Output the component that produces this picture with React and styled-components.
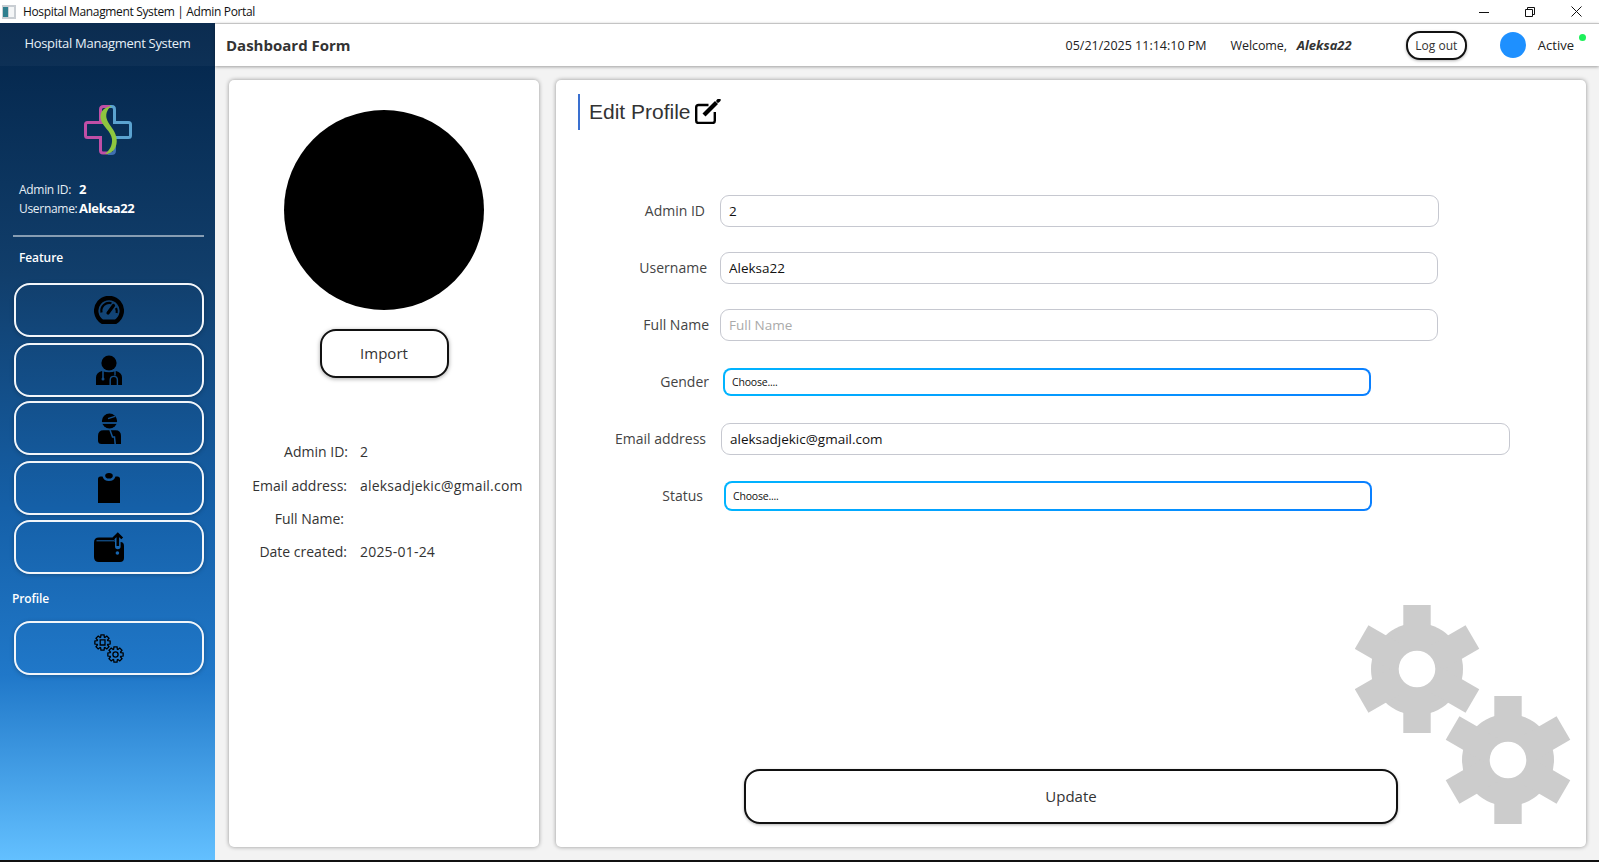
import React from "react";
import styled, { createGlobalStyle } from "styled-components";

const GlobalStyle = createGlobalStyle`
  html, body {
    margin: 0;
    padding: 0;
    background: #f3f3f3;
    overflow: hidden;
  }
  * {
    box-sizing: border-box;
  }
  body {
    font-family: "Open Sans", "Noto Sans", "Liberation Sans", sans-serif;
    color: #2b2b2b;
  }
`;

const Page = styled.div`
  width: 1599px;
  height: 862px;
  display: flex;
  flex-direction: column;
  border-bottom: 2px solid #111;
`;

const TitleBar = styled.div`
  height: 23px;
  flex: none;
  display: flex;
  align-items: center;
  padding-left: 2px;
  background: #fff;
  font-size: 12px;
  color: #111;
  letter-spacing: -0.35px;
`;

const WindowTitle = styled.span`
  margin-left: 7px;
  flex: 1;
`;

const WindowControls = styled.div`
  display: flex;
  align-items: center;
`;

const WindowButton = styled.div`
  width: 46px;
  height: 23px;
  display: flex;
  align-items: center;
  justify-content: center;
`;

const Body = styled.div`
  flex: 1;
  display: flex;
  min-height: 0;
`;

const Sidebar = styled.aside`
  width: 215px;
  flex: none;
  display: flex;
  flex-direction: column;
  color: #fff;
  background: linear-gradient(#03254a 0%, #113e6b 30%, #1560a8 58%, #2078c9 78%, #63c0ff 100%);
`;

const SideTitle = styled.div`
  height: 43px;
  flex: none;
  display: flex;
  align-items: center;
  justify-content: center;
  padding-bottom: 3px;
  font-size: 13px;
  letter-spacing: -0.3px;
  color: #e6f0f8;
  background: rgba(255, 255, 255, 0.035);
`;

const LogoWrap = styled.div`
  display: flex;
  justify-content: center;
  padding: 39px 0 0 0;
  height: 114px;
`;

const SideInfo = styled.div`
  padding-left: 19px;
  font-size: 12px;
  line-height: 19px;
  letter-spacing: -0.3px;
  color: #e6eef5;
`;

const SideInfoRow = styled.div`
  display: flex;
  align-items: center;
`;

const SideInfoLabel = styled.span`
  width: 60px;
  white-space: nowrap;
`;

const SideInfoValue = styled.span`
  font-size: 13px;
  font-weight: 700;
  color: #fff;
`;

const Divider = styled.div`
  height: 2px;
  margin: 17px 11px 0 13px;
  background: rgba(255, 255, 255, 0.5);
`;

const SectionLabel = styled.div`
  margin-top: ${(p) => p.$top}px;
  padding-left: ${(p) => p.$left}px;
  font-size: 12px;
  line-height: 16px;
  font-weight: 600;
  letter-spacing: -0.1px;
  color: #fff;
`;

const NavButton = styled.button`
  width: 190px;
  height: 54px;
  flex: none;
  margin: ${(p) => p.$top}px 0 0 14px;
  display: flex;
  align-items: center;
  justify-content: center;
  padding: 0;
  color: #000;
  background: transparent;
  border: 2px solid #f2f6fa;
  border-radius: 16px;
  box-shadow: 0 1px 4px rgba(0, 0, 0, 0.25);
`;

const Main = styled.main`
  flex: 1;
  min-width: 0;
  display: flex;
  flex-direction: column;
  background: #f3f3f3;
`;

const Header = styled.header`
  height: 43px;
  flex: none;
  display: flex;
  align-items: center;
  padding: 0 25px 0 11px;
  background: #fff;
  border-top: 1px solid #c4c4c4;
  box-shadow: 0 1px 3px rgba(0, 0, 0, 0.35);
  position: relative;
  z-index: 1;
`;

const PageTitle = styled.h1`
  margin: 0;
  flex: 1;
  font-size: 15px;
  font-weight: 700;
  color: #333;
`;

const DateText = styled.span`
  font-size: 12.5px;
  margin-right: 24px;
  color: #222;
`;

const Welcome = styled.span`
  font-size: 12.5px;
  color: #222;
  margin-right: 10px;
  letter-spacing: -0.1px;
`;

const WelcomeName = styled.span`
  width: 55px;
  font-size: 13px;
  font-weight: 700;
  font-style: italic;
  color: #333;
  margin-right: 54px;
  white-space: nowrap;
`;

const LogoutButton = styled.button`
  width: 61px;
  height: 29px;
  padding: 0;
  font-family: inherit;
  font-size: 12px;
  color: #333;
  background: #fff;
  border: 2px solid #111;
  border-radius: 14px;
  box-shadow: 0 1px 3px rgba(0, 0, 0, 0.3);
`;

const Avatar = styled.div`
  width: 26px;
  height: 26px;
  margin-left: 33px;
  border-radius: 50%;
  background: #1e90ff;
`;

const ActiveText = styled.span`
  margin-left: 12px;
  font-size: 13px;
  color: #222;
`;

const ActiveDot = styled.span`
  position: absolute;
  top: 10px;
  right: 13px;
  width: 7px;
  height: 7px;
  border-radius: 50%;
  background: #1df05a;
`;

const Content = styled.div`
  flex: 1;
  min-height: 0;
  display: flex;
  gap: 17px;
  padding: 14px 13px 13px 14px;
`;

const Card = styled.section`
  position: relative;
  background: #fff;
  border-radius: 5px;
  box-shadow: 0 0 4px rgba(0, 0, 0, 0.4);
`;

const ProfileCard = styled(Card)`
  width: 310px;
  flex: none;
  display: flex;
  flex-direction: column;
  align-items: center;
  padding-top: 30px;
`;

const Photo = styled.div`
  width: 200px;
  height: 200px;
  border-radius: 50%;
  background: #000;
`;

const ImportButton = styled.button`
  width: 129px;
  height: 49px;
  margin-top: 19px;
  padding: 0 0 2px;
  font-family: inherit;
  font-size: 15px;
  color: #333;
  background: #fff;
  border: 2px solid #111;
  border-radius: 16px;
  box-shadow: 0 1px 4px rgba(0, 0, 0, 0.35);
`;

const Details = styled.dl`
  width: 100%;
  margin: 57px 0 0;
`;

const DetailRow = styled.div`
  height: 33.4px;
  display: flex;
  align-items: center;
  font-size: 14px;
  color: #333;
`;

const DetailLabel = styled.dt`
  width: ${(p) => p.$end}px;
  flex: none;
  text-align: right;
  white-space: nowrap;
`;

const DetailValue = styled.dd`
  margin: 0 0 0 ${(p) => 131 - p.$end}px;
  white-space: nowrap;
  letter-spacing: 0.2px;
`;

const FormCard = styled(Card)`
  flex: 1;
  min-width: 0;
  padding: 14px 0 0 22px;
`;

const EditTitle = styled.div`
  height: 36px;
  display: flex;
  align-items: center;
  padding-left: 9px;
  border-left: 2px solid #3a70d0;
  font-family: "Liberation Sans", Arial, sans-serif;
  font-size: 21px;
  color: #333;
`;

const EditIcon = styled.svg`
  margin: -2px 0 0 4px;
`;

const Form = styled.form`
  margin: 52px 0 0 -22px;
`;

const FormRow = styled.div`
  height: 57px;
  display: flex;
  align-items: center;
`;

const FieldLabel = styled.label`
  width: ${(p) => p.$end}px;
  flex: none;
  text-align: right;
  font-size: 14px;
  color: #444;
  white-space: nowrap;
`;

const TextField = styled.input`
  width: ${(p) => p.$width}px;
  height: 32px;
  margin-left: ${(p) => p.$offset}px;
  padding: 0 8px;
  font-family: inherit;
  font-size: 13.5px;
  color: #111;
  background: #fff;
  border: 1px solid #c6c8d0;
  border-radius: 9px;
  outline: none;

  &::placeholder {
    color: #aaa;
  }
`;

const ChoiceField = styled.div`
  width: 648px;
  height: ${(p) => p.$height}px;
  margin-left: ${(p) => p.$offset}px;
  padding-left: 7px;
  display: flex;
  align-items: center;
  font-size: 10.5px;
  letter-spacing: -0.2px;
  color: #111;
  border: 2px solid transparent;
  border-radius: 8px;
  background:
    linear-gradient(#fff, #fff) padding-box,
    linear-gradient(90deg, #00b4ff, #0a80ff) border-box;
`;

const UpdateButton = styled.button`
  position: absolute;
  left: 188px;
  bottom: 23px;
  width: 654px;
  height: 55px;
  padding: 0 0 2px;
  font-family: inherit;
  font-size: 15px;
  color: #333;
  background: #fff;
  border: 2px solid #111;
  border-radius: 16px;
  box-shadow: 0 1px 3px rgba(0, 0, 0, 0.3);
`;

const GearArt = styled.svg`
  position: absolute;
  right: 15px;
  bottom: 22px;
`;

function HospitalLogo() {
  return (
    <svg width="48" height="50" viewBox="0 0 48 50" fill="none">
      <path d="M21 17.5 H3.5 q-2 0 -2 2 v11 q0 2 2 2 H16.5 v13 q0 2.5 2.5 2.5 H25" stroke="#c04fa6" strokeWidth="3" />
      <path d="M16.5 18 V4.5 q0 -3 3 -3 H26" stroke="#c04fa6" strokeWidth="3" />
      <path d="M26 1.5 h2 q2.5 0 2.5 3 v13 h14 q2 0 2 2 v11 q0 2 -2 2 H31" stroke="#5ba3d0" strokeWidth="3" />
      <path d="M30.5 32 v13.5 q0 3 -3 3 H24" stroke="#3f6fb0" strokeWidth="3" />
      <path d="M28 1 C19 2 15 8 17 15 C19 22 27 26 28 34 C28.5 40 26 45 21 49 C29 49 34 42 32.5 33 C31 24 24 20 22.5 13 C21.5 8 24 3 28 1 Z" fill="#8fc63f" />
    </svg>
  );
}

function GaugeIcon() {
  return (
    <svg width="30" height="28" viewBox="0 0 30 28" fill="none" stroke="currentColor">
      <path d="M8.5 25.8 A12.8 12.8 0 1 1 21.5 25.8 Z" strokeWidth="4.4" strokeLinejoin="round" />
      <path d="M7.5 16.5 A8 8 0 0 1 17.5 7.2" strokeWidth="2.2" />
      <path d="M22 12 A8 8 0 0 1 22.6 17" strokeWidth="2.2" />
      <path d="M14 17 L19.5 9.5" strokeWidth="3.2" strokeLinecap="round" />
    </svg>
  );
}

function DoctorIcon() {
  return (
    <svg width="26" height="30" viewBox="0 0 26 30">
      <mask id="doctor-cut">
        <rect width="26" height="30" fill="#fff" />
        <path d="M7 15 V23" stroke="#000" strokeWidth="1.6" />
        <circle cx="7" cy="24" r="1.5" fill="#000" />
        <path d="M19 15 V20.5 M14.2 30 V25 q0 -3.6 3.6 -3.6 t3.6 3.6 V30" stroke="#000" strokeWidth="1.4" fill="none" />
      </mask>
      <circle cx="13" cy="8" r="7.6" fill="currentColor" />
      <path d="M0 30 V22.5 Q0 17.5 6 16 Q13 18.6 20 16 Q26 17.5 26 22.5 V30 Z" fill="currentColor" mask="url(#doctor-cut)" />
    </svg>
  );
}

function InjuredIcon() {
  return (
    <svg width="23" height="31" viewBox="0 0 23 31">
      <mask id="injured-cut">
        <rect width="23" height="31" fill="#fff" />
        <path d="M3 10 H19" stroke="#000" strokeWidth="1.8" />
        <path d="M10 5.6 L17 3.4" stroke="#000" strokeWidth="1.4" />
        <path d="M12 17 L14.5 24 H16.5 L17.2 31" stroke="#000" strokeWidth="1.5" fill="none" />
      </mask>
      <g fill="currentColor" mask="url(#injured-cut)">
        <circle cx="11.5" cy="8" r="7.6" />
        <path d="M0 27.5 V23 Q0 17.2 5.5 17.2 H17.5 Q23 17.2 23 23 V31 H3.5 Q0 31 0 27.5 Z" />
      </g>
    </svg>
  );
}

function ClipboardIcon() {
  return (
    <svg width="22" height="30" viewBox="0 0 22 30" fill="currentColor">
      <ellipse cx="11" cy="2.8" rx="3.8" ry="2.8" />
      <path d="M0 6 Q0 3.5 2.5 3.5 H4.5 Q6 8 11 8 T17.5 3.5 H19.5 Q22 3.5 22 6 V30 H0 Z" />
    </svg>
  );
}

function FolderUploadIcon() {
  return (
    <svg width="30" height="30" viewBox="0 0 30 30" fill="currentColor">
      <mask id="folder-cut">
        <rect width="30" height="30" fill="#fff" />
        <path d="M2.5 8.8 H20" stroke="#000" strokeWidth="1" />
        <path d="M23.8 6 V14.5" stroke="#000" strokeWidth="5.6" strokeLinecap="round" />
        <circle cx="23.4" cy="21" r="1.8" fill="#000" />
      </mask>
      <path
        d="M5 5.5 H20.5 V10 H26.5 Q30 10 30 14 V26 q0 4 -4 4 H5 q-5 0 -5 -5 V10.5 q0 -5 5 -5 Z"
        mask="url(#folder-cut)"
      />
      <path d="M23.8 14 V2 M19.4 6.4 L23.8 2 L28.2 6.4" fill="none" stroke="currentColor" strokeWidth="2.6" />
    </svg>
  );
}

// one cog as a closed outline, used for the small sidebar icon
const cogPath = (cx, cy, r, rOut) => {
  const pts = [];
  for (let i = 0; i < 8; i++) {
    const a = (i * Math.PI) / 4;
    const w = 0.2;
    [[r, a - 0.34], [rOut, a - w], [rOut, a + w], [r, a + 0.34]].forEach(([rad, an]) => {
      pts.push(`${(cx + rad * Math.sin(an)).toFixed(2)} ${(cy - rad * Math.cos(an)).toFixed(2)}`);
    });
  }
  return `M${pts.join(" L")} Z`;
};

function CogsIcon() {
  return (
    <svg width="30" height="29" viewBox="0 0 30 29" fill="none" stroke="currentColor" strokeWidth="1.3">
      <path d={cogPath(8.5, 8.5, 5.6, 7.8)} />
      <path d="M6.2 5.8 H11 V11 H6.2 Z" />
      <path d={cogPath(21.5, 20.5, 5.6, 7.8)} />
      <circle cx="21.5" cy="20.5" r="2.6" />
    </svg>
  );
}

function BigGear({ x, y }) {
  return (
    <g transform={`translate(${x} ${y})`}>
      <circle r="46" fill="#ccc" />
      {[0, 60, 120].map((a) => (
        <rect key={a} x="-13.7" y="-64" width="27.4" height="128" fill="#ccc" transform={`rotate(${a})`} />
      ))}
      <circle r="18.3" fill="#fff" />
    </g>
  );
}

const rows = [
  { label: "Admin ID", end: 149, offset: 15, width: 719, value: "2" },
  { label: "Username", end: 151, offset: 13, width: 718, value: "Aleksa22" },
  { label: "Full Name", end: 153, offset: 11, width: 718, value: "", placeholder: "Full Name" },
  { label: "Gender", end: 153, offset: 14, choiceHeight: 28 },
  { label: "Email address", end: 150, offset: 15, width: 789, value: "aleksadjekic@gmail.com" },
  { label: "Status", end: 147, offset: 21, choiceHeight: 30 },
];

const details = [
  { label: "Admin ID:", end: 119, value: "2" },
  { label: "Email address:", end: 118, value: "aleksadjekic@gmail.com" },
  { label: "Full Name:", end: 115, value: "" },
  { label: "Date created:", end: 118, value: "2025-01-24" },
];

export default function App() {
  return (
    <Page>
      <GlobalStyle />
      <TitleBar>
        <svg width="14" height="14" viewBox="0 0 14 14">
          <rect width="14" height="14" fill="#c9ced3" />
          <rect x="1" y="2" width="5" height="10" fill="#2f7f8f" />
          <rect x="7" y="2" width="5" height="10" fill="#f4f6f7" />
        </svg>
        <WindowTitle>Hospital Managment System | Admin Portal</WindowTitle>
        <WindowControls>
          <WindowButton>
            <svg width="10" height="10" viewBox="0 0 10 10" stroke="#111">
              <path d="M0 5.5 H10" />
            </svg>
          </WindowButton>
          <WindowButton>
            <svg width="10" height="10" viewBox="0 0 10 10" fill="none" stroke="#111">
              <path d="M0.5 2.5 H7.5 V9.5 H0.5 Z M2.5 2.5 V0.5 H9.5 V7.5 H7.5" />
            </svg>
          </WindowButton>
          <WindowButton>
            <svg width="11" height="11" viewBox="0 0 11 11" stroke="#111">
              <path d="M0.5 0.5 L10.5 10.5 M10.5 0.5 L0.5 10.5" />
            </svg>
          </WindowButton>
        </WindowControls>
      </TitleBar>
      <Body>
        <Sidebar>
          <SideTitle>Hospital Managment System</SideTitle>
          <LogoWrap>
            <HospitalLogo />
          </LogoWrap>
          <SideInfo>
            <SideInfoRow>
              <SideInfoLabel>Admin ID:</SideInfoLabel>
              <SideInfoValue>2</SideInfoValue>
            </SideInfoRow>
            <SideInfoRow>
              <SideInfoLabel>Username:</SideInfoLabel>
              <SideInfoValue>Aleksa22</SideInfoValue>
            </SideInfoRow>
          </SideInfo>
          <Divider />
          <SectionLabel $top={13} $left={19}>Feature</SectionLabel>
          <NavButton $top={17}><GaugeIcon /></NavButton>
          <NavButton $top={6}><DoctorIcon /></NavButton>
          <NavButton $top={4}><InjuredIcon /></NavButton>
          <NavButton $top={6}><ClipboardIcon /></NavButton>
          <NavButton $top={5}><FolderUploadIcon /></NavButton>
          <SectionLabel $top={17} $left={12}>Profile</SectionLabel>
          <NavButton $top={14}><CogsIcon /></NavButton>
        </Sidebar>
        <Main>
          <Header>
            <PageTitle>Dashboard Form</PageTitle>
            <DateText>05/21/2025 11:14:10 PM</DateText>
            <Welcome>Welcome,</Welcome>
            <WelcomeName>Aleksa22</WelcomeName>
            <LogoutButton>Log out</LogoutButton>
            <Avatar />
            <ActiveText>Active</ActiveText>
            <ActiveDot />
          </Header>
          <Content>
            <ProfileCard>
              <Photo />
              <ImportButton>Import</ImportButton>
              <Details>
                {details.map((d) => (
                  <DetailRow key={d.label}>
                    <DetailLabel $end={d.end}>{d.label}</DetailLabel>
                    <DetailValue $end={d.end}>{d.value}</DetailValue>
                  </DetailRow>
                ))}
              </Details>
            </ProfileCard>
            <FormCard>
              <EditTitle>
                Edit Profile
                <EditIcon width="26" height="25" viewBox="0 0 26 25" fill="none" stroke="#000">
                  <path d="M13.5 6 H3.5 Q1.2 6 1.2 8.3 V21.7 Q1.2 24 3.5 24 H17.5 Q19.8 24 19.8 21.7 V13" strokeWidth="2.4" />
                  <path d="M9 16 L21.5 3.5" strokeWidth="4.2" />
                  <path d="M23 2 L24 1" strokeWidth="3.4" strokeLinecap="round" />
                </EditIcon>
              </EditTitle>
              <Form>
                {rows.map((r) => (
                  <FormRow key={r.label}>
                    <FieldLabel $end={r.end}>{r.label}</FieldLabel>
                    {r.choiceHeight ? (
                      <ChoiceField $offset={r.offset} $height={r.choiceHeight}>Choose....</ChoiceField>
                    ) : (
                      <TextField
                        $offset={r.offset}
                        $width={r.width}
                        defaultValue={r.value}
                        placeholder={r.placeholder}
                      />
                    )}
                  </FormRow>
                ))}
              </Form>
              <UpdateButton type="button">Update</UpdateButton>
              <GearArt width="216" height="220" viewBox="0 0 216 220">
                <BigGear x={62} y={64} />
                <BigGear x={153} y={155} />
              </GearArt>
            </FormCard>
          </Content>
        </Main>
      </Body>
    </Page>
  );
}
